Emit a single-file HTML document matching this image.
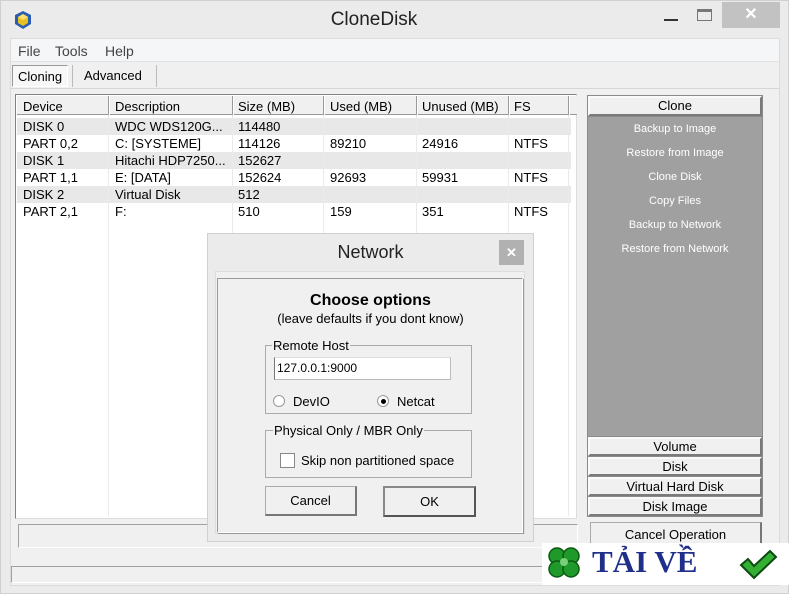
<!DOCTYPE html>
<html><head><meta charset="utf-8"><style>
*{box-sizing:border-box;margin:0;padding:0}
body{width:789px;height:594px;position:relative;overflow:hidden;background:#ebebeb;font-family:"Liberation Sans",sans-serif;font-size:13px;color:#000}
.a{position:absolute}
.t{font-size:13px;white-space:nowrap}
.rb{position:absolute;background:#f0f0f0;border:2px solid #7a7a7a;border-top-color:#fafafa;border-left-color:#fafafa;outline:1px solid #8a8a8a;text-align:center;font-size:13px;line-height:16px}
.gi{position:absolute;left:0;width:176px;text-align:center;color:#fff;font-size:11px}
</style></head><body>
<div class="a" style="left:0;top:0;width:789px;height:594px;border:1px solid #d0d0d0"></div>
<svg class="a" style="left:13px;top:10px" width="20" height="20" viewBox="0 0 20 20"><polygon points="10,1 18,5 18,14 10,19 2,14 2,5" fill="#2a5db0"/><polygon points="10,4 15,7 15,13 10,16 5,13 5,7" fill="#e8c020"/><polygon points="10,4 15,7 10,10 5,7" fill="#f8e070"/></svg>
<div class="a t" style="left:0;width:748px;top:9px;text-align:center;font-size:19px;color:#222">CloneDisk</div>
<div class="a" style="left:664px;top:19px;width:14px;height:2px;background:#333"></div>
<div class="a" style="left:697px;top:9px;width:15px;height:12px;border:1px solid #777;border-top:3px solid #777"></div>
<div class="a" style="left:722px;top:2px;width:58px;height:26px;background:#c2c2c2;color:#fff;text-align:center;font-size:16px;line-height:26px;font-weight:bold">✕</div>
<div class="a" style="left:10px;top:38px;width:770px;height:548px;background:#f0f0f0;border:1px solid #dcdcdc"></div>
<div class="a" style="left:11px;top:39px;width:768px;height:23px;background:#f5f6f8;border-bottom:1px solid #e2e2e2"></div>
<div class="a t" style="left:18px;top:43px;font-size:14px;color:#444">File</div>
<div class="a t" style="left:55px;top:43px;font-size:14px;color:#444">Tools</div>
<div class="a t" style="left:105px;top:43px;font-size:14px;color:#444">Help</div>
<div class="a" style="left:12px;top:65px;width:56px;height:22px;border:1px solid #999;border-right-color:#fff;border-bottom-color:#fff;background:#f7f7f7"></div>
<div class="a t" style="left:18px;top:69px">Cloning</div>
<div class="a" style="left:72px;top:65px;width:1px;height:22px;background:#bbb"></div>
<div class="a t" style="left:84px;top:68px">Advanced</div>
<div class="a" style="left:156px;top:65px;width:1px;height:22px;background:#bbb"></div>
<div class="a" style="left:10px;top:88px;width:770px;height:1px;background:#d6d6d6"></div>
<div class="a" style="left:15px;top:94px;width:562px;height:425px;background:#fff;border:1px solid #828282;border-right-color:#ddd;border-bottom-color:#ddd"></div>
<div class="a" style="left:17px;top:96px;width:560px;height:19px;background:#f0f0f0;border-bottom:1px solid #999"></div>
<div class="a" style="left:17px;top:118px;width:554px;height:17px;background:#e8e8e8"></div>
<div class="a" style="left:17px;top:152px;width:554px;height:17px;background:#e8e8e8"></div>
<div class="a" style="left:17px;top:186px;width:554px;height:17px;background:#e8e8e8"></div>
<div class="a" style="left:108px;top:96px;width:1px;height:420px;background:#eaeaea"></div>
<div class="a" style="left:232px;top:96px;width:1px;height:420px;background:#eaeaea"></div>
<div class="a" style="left:323px;top:96px;width:1px;height:420px;background:#eaeaea"></div>
<div class="a" style="left:416px;top:96px;width:1px;height:420px;background:#eaeaea"></div>
<div class="a" style="left:508px;top:96px;width:1px;height:420px;background:#eaeaea"></div>
<div class="a" style="left:568px;top:96px;width:1px;height:420px;background:#eaeaea"></div>
<div class="a" style="left:108px;top:96px;width:2px;height:19px;border-left:1px solid #999;border-right:1px solid #fff"></div>
<div class="a" style="left:232px;top:96px;width:2px;height:19px;border-left:1px solid #999;border-right:1px solid #fff"></div>
<div class="a" style="left:323px;top:96px;width:2px;height:19px;border-left:1px solid #999;border-right:1px solid #fff"></div>
<div class="a" style="left:416px;top:96px;width:2px;height:19px;border-left:1px solid #999;border-right:1px solid #fff"></div>
<div class="a" style="left:508px;top:96px;width:2px;height:19px;border-left:1px solid #999;border-right:1px solid #fff"></div>
<div class="a" style="left:568px;top:96px;width:2px;height:19px;border-left:1px solid #999;border-right:1px solid #fff"></div>
<div class="a t" style="left:23px;top:99px">Device</div><div class="a t" style="left:115px;top:99px">Description</div><div class="a t" style="left:238px;top:99px">Size (MB)</div><div class="a t" style="left:330px;top:99px">Used (MB)</div><div class="a t" style="left:422px;top:99px">Unused (MB)</div><div class="a t" style="left:514px;top:99px">FS</div>
<div class="a t" style="left:23px;top:119px">DISK 0</div><div class="a t" style="left:115px;top:119px">WDC WDS120G...</div><div class="a t" style="left:238px;top:119px">114480</div>
<div class="a t" style="left:23px;top:136px">PART 0,2</div><div class="a t" style="left:115px;top:136px">C: [SYSTEME]</div><div class="a t" style="left:238px;top:136px">114126</div><div class="a t" style="left:330px;top:136px">89210</div><div class="a t" style="left:422px;top:136px">24916</div><div class="a t" style="left:514px;top:136px">NTFS</div>
<div class="a t" style="left:23px;top:153px">DISK 1</div><div class="a t" style="left:115px;top:153px">Hitachi HDP7250...</div><div class="a t" style="left:238px;top:153px">152627</div>
<div class="a t" style="left:23px;top:170px">PART 1,1</div><div class="a t" style="left:115px;top:170px">E: [DATA]</div><div class="a t" style="left:238px;top:170px">152624</div><div class="a t" style="left:330px;top:170px">92693</div><div class="a t" style="left:422px;top:170px">59931</div><div class="a t" style="left:514px;top:170px">NTFS</div>
<div class="a t" style="left:23px;top:187px">DISK 2</div><div class="a t" style="left:115px;top:187px">Virtual Disk</div><div class="a t" style="left:238px;top:187px">512</div>
<div class="a t" style="left:23px;top:204px">PART 2,1</div><div class="a t" style="left:115px;top:204px">F:</div><div class="a t" style="left:238px;top:204px">510</div><div class="a t" style="left:330px;top:204px">159</div><div class="a t" style="left:422px;top:204px">351</div><div class="a t" style="left:514px;top:204px">NTFS</div>
<div class="a" style="left:18px;top:524px;width:560px;height:24px;border:1px solid #a0a0a0;border-right-color:#fff;border-bottom-color:#fff"></div>
<div class="a" style="left:11px;top:566px;width:770px;height:17px;border:1px solid #a0a0a0;border-right-color:#fff;border-bottom-color:#fff"></div>
<div class="a" style="left:587px;top:95px;width:176px;height:422px;border:1px solid #888;background:#a0a0a0"></div>
<div class="rb" style="left:588px;top:96px;width:174px;height:20px">Clone</div>
<div class="a" style="left:587px;top:116px;width:176px;height:320px">
<div class="gi" style="top:7px">Backup to Image</div><div class="gi" style="top:31px">Restore from Image</div><div class="gi" style="top:55px">Clone Disk</div><div class="gi" style="top:79px">Copy Files</div><div class="gi" style="top:103px">Backup to Network</div><div class="gi" style="top:127px">Restore from Network</div></div>
<div class="rb" style="left:588px;top:437px;width:174px;height:19px;line-height:15px">Volume</div>
<div class="rb" style="left:588px;top:457px;width:174px;height:19px;line-height:15px">Disk</div>
<div class="rb" style="left:588px;top:477px;width:174px;height:19px;line-height:15px">Virtual Hard Disk</div>
<div class="rb" style="left:588px;top:497px;width:174px;height:19px;line-height:15px">Disk Image</div>
<div class="a" style="left:590px;top:522px;width:172px;height:26px;border:1px solid #aaa;border-right:2px solid #777;background:#f0f0f0;text-align:center;line-height:24px">Cancel Operation</div>
<div class="a" style="left:207px;top:233px;width:327px;height:309px;background:#ebebeb;border:1px solid #d0d0d0"></div>
<div class="a t" style="left:207px;top:242px;width:327px;text-align:center;font-size:18px;color:#222">Network</div>
<div class="a" style="left:499px;top:240px;width:25px;height:25px;background:#b1b1b1;color:#fff;text-align:center;line-height:25px;font-size:13px;font-weight:bold">✕</div>
<div class="a" style="left:215px;top:271px;width:310px;height:263px;background:#f0f0f0;border:1px solid #ddd"></div>
<div class="a" style="left:217px;top:278px;width:306px;height:255px;border:1px solid #999;border-right-color:#fff;border-bottom-color:#fff;box-shadow:1px 1px 0 #999"></div>
<div class="a t" style="left:207px;top:292px;width:327px;text-align:center;font-size:16px;font-weight:bold">Choose options</div>
<div class="a t" style="left:207px;top:311px;width:327px;text-align:center;font-size:13px">(leave defaults if you dont know)</div>
<div class="a" style="left:265px;top:345px;width:207px;height:69px;border:1px solid #aaa"></div>
<div class="a t" style="left:272px;top:338px;background:#f0f0f0;padding:0 1px">Remote Host</div>
<div class="a" style="left:274px;top:357px;width:177px;height:23px;background:#fff;border:1px solid #bbb;border-left-color:#777;border-top-color:#ddd"></div>
<div class="a t" style="left:277px;top:361px;font-size:12px">127.0.0.1:9000</div>
<div class="a" style="left:273px;top:395px;width:12px;height:12px;border-radius:50%;border:1px solid #999;background:#fff"></div>
<div class="a t" style="left:293px;top:394px">DevIO</div>
<div class="a" style="left:377px;top:395px;width:12px;height:12px;border-radius:50%;border:1px solid #999;background:#fff"></div>
<div class="a" style="left:381px;top:399px;width:5px;height:5px;border-radius:50%;background:#000"></div>
<div class="a t" style="left:397px;top:394px">Netcat</div>
<div class="a" style="left:265px;top:430px;width:207px;height:48px;border:1px solid #aaa"></div>
<div class="a t" style="left:273px;top:423px;background:#f0f0f0;padding:0 1px">Physical Only / MBR Only</div>
<div class="a" style="left:280px;top:453px;width:15px;height:15px;border:1px solid #888;background:#fff"></div>
<div class="a t" style="left:301px;top:453px">Skip non partitioned space</div>
<div class="a" style="left:265px;top:486px;width:92px;height:30px;border:1px solid #aaa;border-right:2px solid #777;border-bottom:2px solid #777;background:#f0f0f0;text-align:center;line-height:28px">Cancel</div>
<div class="a" style="left:383px;top:486px;width:93px;height:31px;border:2px solid #555;border-top-color:#888;border-left-color:#888;background:#f0f0f0;text-align:center;line-height:27px">OK</div>
<div class="a" style="left:542px;top:543px;width:247px;height:42px;background:#fff"></div>
<svg class="a" style="left:544px;top:545px" width="40" height="38" viewBox="0 0 40 38"><g fill="#1f9a2a" stroke="#0b5a12" stroke-width="1.5"><circle cx="13" cy="11" r="8"/><circle cx="27" cy="11" r="8"/><circle cx="13" cy="24" r="8"/><circle cx="27" cy="24" r="8"/></g><circle cx="20" cy="17" r="4" fill="#7ad07a"/></svg>
<div class="a t" style="left:592px;top:544px;font-family:'Liberation Serif',serif;font-weight:bold;font-size:31px;color:#1f2f8a">TẢI VỀ</div>
<svg class="a" style="left:738px;top:548px" width="40" height="32" viewBox="0 0 40 32"><path d="M3 17 L10 11 L16 18 L32 3 L38 9 L16 30 Z" fill="#33b033" stroke="#0b4a10" stroke-width="2"/></svg>
</body></html>
